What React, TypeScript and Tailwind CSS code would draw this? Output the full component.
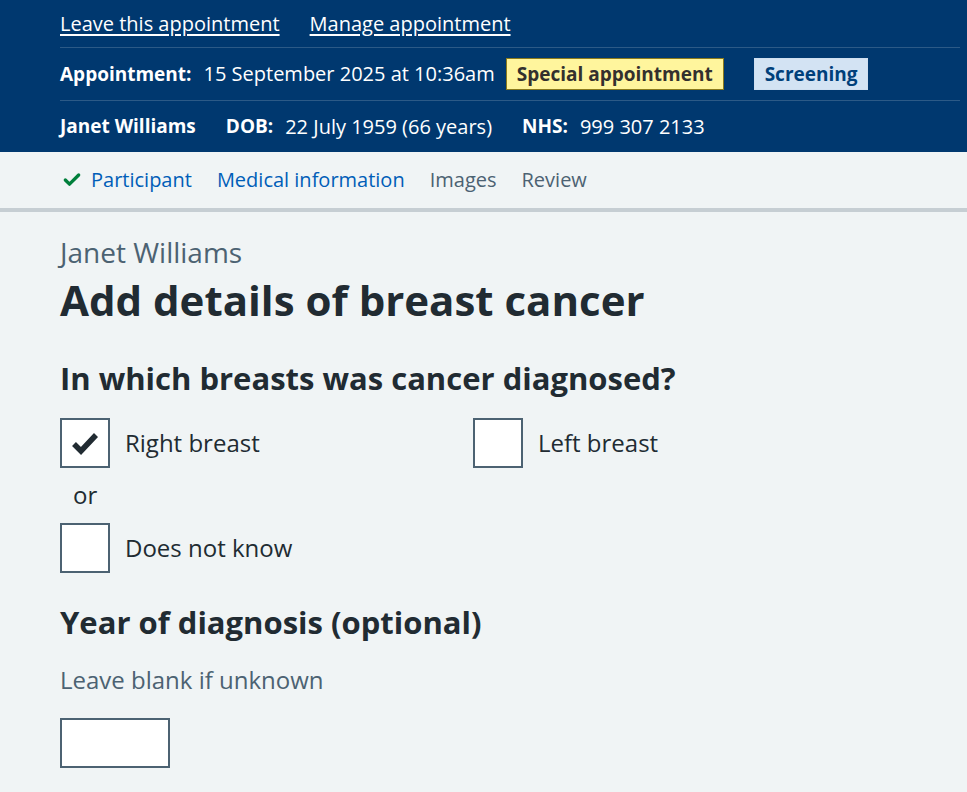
import { Check } from "lucide-react";

const font = { fontFamily: '"Open Sans", "Liberation Sans", sans-serif' };

function Checkbox({ label, checked }: { label: string; checked?: boolean }) {
  return (
    <label className="flex items-center gap-[15px]">
      <span className="grid h-[50px] w-[50px] place-items-center border-2 border-[#4c6272] bg-white">
        {checked && (
          <svg viewBox="0 0 34 34" className="h-[34px] w-[34px]">
            <path d="M6 18 L13 25 L28 9" fill="none" stroke="#212b32" strokeWidth="5.5" />
          </svg>
        )}
      </span>
      <span className="text-[24px] leading-[32px] text-[#212b32]">{label}</span>
    </label>
  );
}

export default function App() {
  return (
    <div style={font} className="min-h-[792px] bg-[#f0f4f5] text-[#212b32]">
      {/* ─── Appointment header ─── */}
      <header className="bg-[#00386f] pl-[60px] pr-[7px] text-[20px] text-white">
        <div className="flex h-[48px] items-center gap-[30px] border-b border-[#2c5a87]">
          <a className="underline underline-offset-[3px]">Leave this appointment</a>
          <a className="underline underline-offset-[3px]">Manage appointment</a>
        </div>
        <div className="flex h-[53px] items-center border-b border-[#2c5a87]">
          <span className="text-[19px] font-bold">Appointment:</span>
          <span className="ml-[12px]">15 September 2025 at 10:36am</span>
          <span className="ml-[11px] border border-[#8a7a1c] bg-[#fff59d] px-[10px] py-[1px] text-[19px] font-bold text-[#33302e]">
            Special appointment
          </span>
          <span className="ml-[30px] border border-[#cfdff0] bg-[#d3e3f3] px-[10px] py-[1px] text-[19px] font-bold text-[#00407a]">
            Screening
          </span>
        </div>
        <div className="flex h-[51px] items-center">
          <span className="text-[19px] font-bold">Janet Williams</span>
          <span className="ml-[30px] text-[19px] font-bold">DOB:</span>
          <span className="ml-[12px]">22 July 1959 (66 years)</span>
          <span className="ml-[30px] text-[19px] font-bold">NHS:</span>
          <span className="ml-[12px]">999 307 2133</span>
        </div>
      </header>

      {/* ─── Section nav ─── */}
      <nav className="flex h-[60px] items-center gap-[25px] border-b-4 border-[#c6ced3] pl-[62px] text-[20px]">
        <span className="flex items-center gap-[9px] text-[#005eb8]">
          <Check className="h-[20px] w-[20px] text-[#007f3b]" strokeWidth={4} />
          Participant
        </span>
        <span className="text-[#005eb8]">Medical information</span>
        <span className="text-[#4c6272]">Images</span>
        <span className="text-[#4c6272]">Review</span>
      </nav>

      {/* ─── Form ─── */}
      <main className="px-[60px] pt-[22px]">
        <p className="text-[28px] leading-[36px] text-[#4c6272]">Janet Williams</p>
        <h1 className="mt-[4px] text-[42px] font-bold leading-[52px]">Add details of breast cancer</h1>

        <h2 className="mt-[32px] text-[31px] font-bold leading-[40px]">
          In which breasts was cancer diagnosed?
        </h2>
        <div className="mt-[20px] grid w-[826px] grid-cols-2">
          <Checkbox label="Right breast" checked />
          <Checkbox label="Left breast" />
        </div>
        <p className="mt-[11px] pl-[13px] text-[24px] leading-[32px]">or</p>
        <div className="mt-[12px]">
          <Checkbox label="Does not know" />
        </div>

        <h2 className="mt-[29px] text-[31px] font-bold leading-[40px]">Year of diagnosis (optional)</h2>
        <p className="mt-[22px] text-[24px] leading-[32px] text-[#4c6272]">Leave blank if unknown</p>
        <input className="mt-[22px] block h-[50px] w-[110px] border-2 border-[#4c6272] bg-white" />
      </main>
    </div>
  );
}
